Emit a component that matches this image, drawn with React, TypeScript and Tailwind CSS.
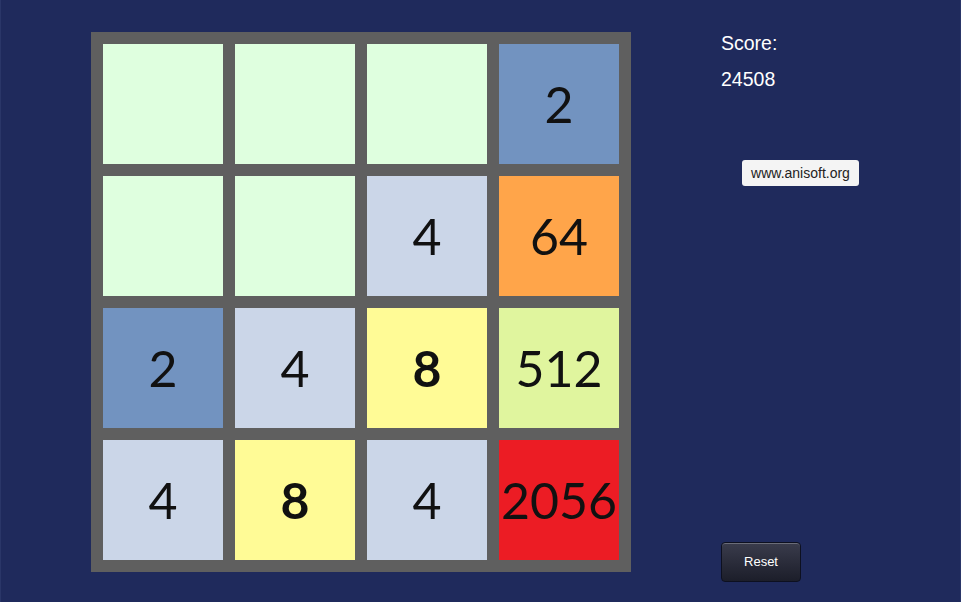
import React from 'react';

type Cell = { value: number | null; bg: string; bold?: boolean };

const tileBg: Record<string, string> = {
  empty: 'bg-[#dfffdf]',
  '2': 'bg-[#7293c0]',
  '4': 'bg-[#cbd6e8]',
  '8': 'bg-[#fffb96]',
  '64': 'bg-[#ffa54a]',
  '512': 'bg-[#e0f59e]',
  '2056': 'bg-[#ec1c24]',
};

const board: (number | null)[] = [
  null, null, null, 2,
  null, null, 4, 64,
  2, 4, 8, 512,
  4, 8, 4, 2056,
];

const cells: Cell[] = board.map((v) => ({
  value: v,
  bg: v === null ? tileBg.empty : tileBg[String(v)],
  bold: v === 8,
}));

const Tile: React.FC<{ cell: Cell }> = ({ cell }) => (
  <div
    className={`${cell.bg} flex items-center justify-center w-[120px] h-[120px] text-[50px] text-[#111] leading-none ${
      cell.bold ? 'font-bold' : 'font-normal'
    }`}
    style={{ fontFamily: 'Lato, "Open Sans", sans-serif' }}
  >
    {cell.value}
  </div>
);

export default function App() {
  return (
    <div className="w-[961px] h-[602px] bg-[#1f2a5c] border-x border-[#2a3668] flex overflow-hidden font-['Liberation_Sans',Arial,sans-serif]">
      <div className="ml-[90px] mt-[32px] w-[540px] h-[540px] bg-[#5f5f5f] p-[12px] grid grid-cols-4 gap-[12px]">
        {cells.map((c, i) => (
          <Tile key={i} cell={c} />
        ))}
      </div>

      <div className="ml-[90px] mt-[32px] flex flex-col h-[550px]">
        <div className="text-white text-[19.5px] leading-[22px]">Score:</div>
        <div className="text-white text-[19.5px] leading-[22px] mt-[14px]">24508</div>
        <div className="ml-[21px] mt-[70px] w-[117px] h-[26px] bg-[#f4f4f4] rounded-[3px] flex items-center justify-center text-[14px] text-[#222]">
          www.anisoft.org
        </div>
        <button className="mt-auto w-[80px] h-[40px] rounded-[4px] border border-[#0d1020] bg-gradient-to-b from-[#3a3c4c] to-[#1c1e2a] shadow-[inset_0_1px_0_rgba(255,255,255,0.25)] text-white text-[13px]">
          Reset
        </button>
      </div>
    </div>
  );
}
